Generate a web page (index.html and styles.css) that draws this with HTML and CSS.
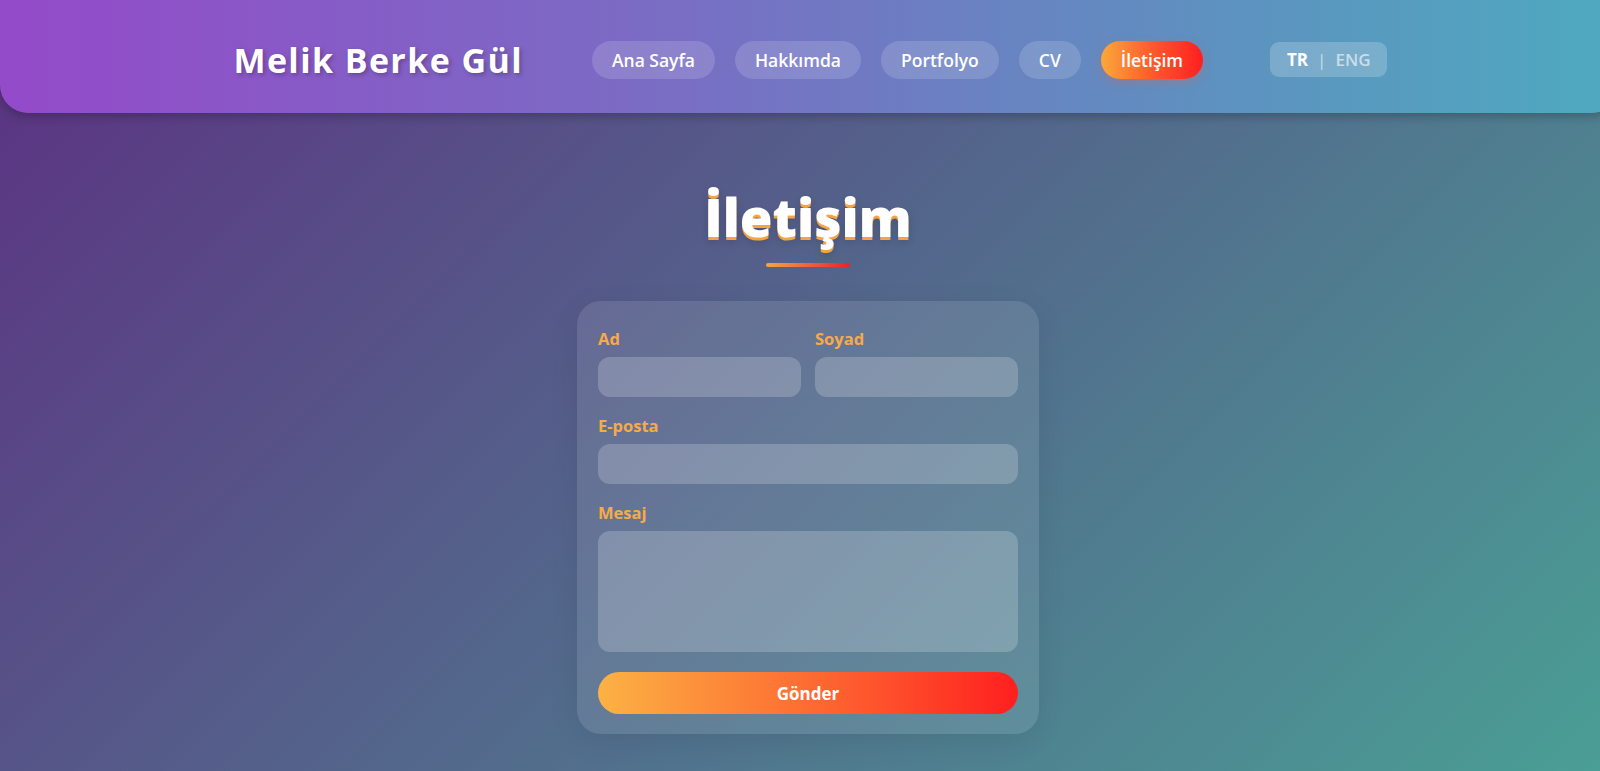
FILE: index.html
```html
<!DOCTYPE html>
<html lang="tr">
<head>
<meta charset="utf-8">
<title>İletişim - Melik Berke Gül</title>
<link rel="stylesheet" href="styles.css">
</head>
<body>
  <header class="site-header">
    <div class="brand">Melik Berke Gül</div>
    <nav class="nav">
      <a class="nav-link" href="#">Ana Sayfa</a>
      <a class="nav-link" href="#">Hakkımda</a>
      <a class="nav-link" href="#">Portfolyo</a>
      <a class="nav-link" href="#">CV</a>
      <a class="nav-link active" href="#">İletişim</a>
    </nav>
    <div class="lang">
      <span class="lang-on">TR</span>
      <span class="lang-sep">|</span>
      <span class="lang-off">ENG</span>
    </div>
  </header>

  <main class="main">
    <h1 class="title">İletişim</h1>
    <div class="title-bar"></div>

    <form class="card">
      <div class="row">
        <div class="group">
          <label class="label">Ad</label>
          <div class="input"></div>
        </div>
        <div class="group">
          <label class="label">Soyad</label>
          <div class="input"></div>
        </div>
      </div>
      <div class="group">
        <label class="label">E-posta</label>
        <div class="input"></div>
      </div>
      <div class="group">
        <label class="label">Mesaj</label>
        <div class="input textarea"></div>
      </div>
      <button class="submit" type="button">Gönder</button>
    </form>
  </main>
</body>
</html>
```

FILE: styles.css
```css
html, body {
  margin: 0;
  padding: 0;
  height: 100%;
  overflow: hidden;
}

body {
  font-family: "Open Sans", "Noto Sans", sans-serif;
  color: #fff;
  background: linear-gradient(135deg, #5c3182 0%, #4a9e95 100%);
}

.site-header {
  box-sizing: border-box;
  width: calc(100% + 20px);
  height: 113px;
  padding-top: 7px;
  display: flex;
  align-items: center;
  justify-content: center;
  background: linear-gradient(90deg, #944ac9 0%, #7a6cc4 40%, #5e91c0 75%, #4eaabf 100%);
  border-radius: 0 0 28px 28px;
  box-shadow: 0 4px 10px rgba(0, 0, 0, 0.22);
}

.brand {
  font-size: 34px;
  font-weight: 700;
  letter-spacing: 1.4px;
  text-shadow: 2px 2px 4px rgba(0, 0, 0, 0.25);
  margin-right: 69px;
  white-space: nowrap;
}

.nav {
  display: flex;
  gap: 20px;
  margin-right: 67px;
}

.nav-link {
  display: flex;
  align-items: center;
  height: 38px;
  padding: 0 20px;
  border-radius: 19px;
  background: rgba(255, 255, 255, 0.15);
  color: #fff;
  text-decoration: none;
  font-size: 17.5px;
  font-weight: 600;
  white-space: nowrap;
}

.nav-link.active {
  background: linear-gradient(90deg, #fba83a 0%, #fd5a2c 50%, #fe1f20 100%);
  box-shadow: 0 3px 10px rgba(255, 90, 40, 0.3);
}

.lang {
  display: flex;
  align-items: center;
  gap: 9px;
  height: 35px;
  padding: 0 16px 0 17px;
  border-radius: 9px;
  background: rgba(255, 255, 255, 0.2);
  font-size: 17px;
  margin-top: -1px;
}

.lang-on {
  font-weight: 700;
}

.lang-sep {
  color: rgba(255, 255, 255, 0.6);
}

.lang-off {
  color: rgba(255, 255, 255, 0.6);
  font-weight: 600;
}

.main {
  width: calc(100% + 16px);
  display: flex;
  flex-direction: column;
  align-items: center;
  padding-top: 68px;
}

.title {
  margin: 0;
  font-size: 53px;
  line-height: 71px;
  font-weight: 800;
  color: #fff;
  text-shadow: 0 3px 0 #f6a442, 0 5px 8px rgba(0, 0, 0, 0.15);
}

.title-bar {
  width: 84px;
  height: 4px;
  margin-top: 11px;
  border-radius: 2px;
  background: linear-gradient(90deg, #f7a440, #e8222c);
}

.card {
  box-sizing: border-box;
  width: 462px;
  margin-top: 34px;
  padding: 28px 21px 20px;
  border-radius: 24px;
  background: rgba(255, 255, 255, 0.1);
  box-shadow: 0 8px 30px rgba(0, 0, 0, 0.08);
  display: flex;
  flex-direction: column;
  gap: 19px;
}

.row {
  display: flex;
  gap: 14px;
}

.row .group {
  flex: 1;
}

.group {
  display: flex;
  flex-direction: column;
  gap: 8px;
}

.label {
  font-size: 16.5px;
  line-height: 20px;
  font-weight: 700;
  color: #f7aa48;
}

.input {
  height: 40px;
  border-radius: 12px;
  background: rgba(255, 255, 255, 0.2);
}

.input.textarea {
  height: 121px;
}

.submit {
  margin-top: 1px;
  height: 42px;
  border: none;
  border-radius: 21px;
  background: linear-gradient(90deg, #fcb244 0%, #fd6c32 50%, #ff1f1f 100%);
  color: #fff;
  font-family: "Open Sans", "Noto Sans", sans-serif;
  font-size: 17px;
  font-weight: 700;
  cursor: pointer;
}
```
